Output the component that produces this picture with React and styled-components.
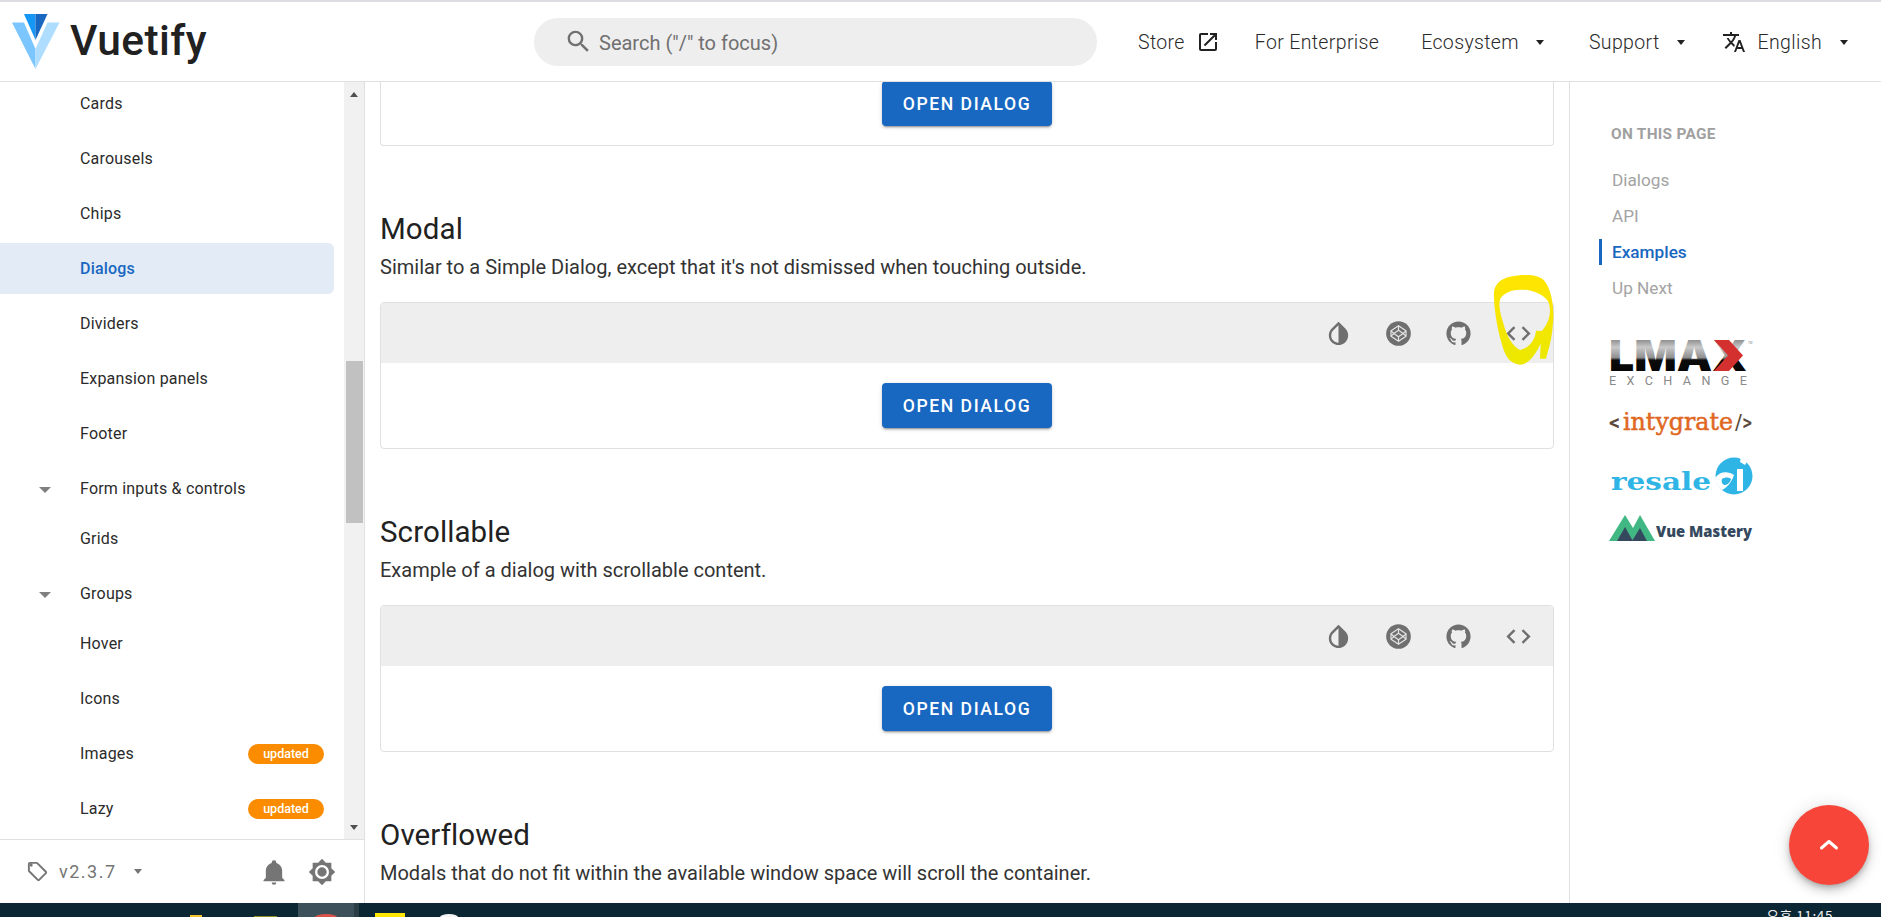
import React from 'react';
import styled, { createGlobalStyle } from 'styled-components';

const Global = createGlobalStyle`
  html, body { margin: 0; padding: 0; height: 100%; overflow: hidden; background: #fff; }
  body { font-family: Roboto, "Noto Sans", sans-serif; color: #212121; }
  * { box-sizing: border-box; }
`;

const Page = styled.div`
  position: relative;
  width: 1881px;
  height: 917px;
  display: flex;
  flex-direction: column;
  overflow: hidden;
  border-top: 2px solid #dcdce2;
`;

/* Header */
const Header = styled.header`
  flex: 0 0 80px;
  display: flex;
  align-items: center;
  border-bottom: 1px solid #e0e0e0;
  background: #fff;
  position: relative;
  z-index: 2;
`;
const Brand = styled.div`
  flex: 0 0 534px;
  display: flex;
  align-items: center;
  padding-left: 12px;
  gap: 10px;
`;
const BrandName = styled.span`
  font-size: 42.5px;
  font-weight: 500;
  line-height: 1;
  letter-spacing: 0.4px;
  color: #212121;
`;
const Search = styled.div`
  flex: 0 0 563px;
  height: 48px;
  border-radius: 24px;
  background: #eeeeee;
  display: flex;
  align-items: center;
  padding-left: 30px;
  gap: 6px;
  font-size: 20px;
  color: #707070;
  font-weight: 400;
`;
const SearchText = styled.span`
  padding-top: 2px;
`;
const Nav = styled.nav`
  display: flex;
  align-items: center;
  margin-left: 41px;
  padding-top: 1px;
  font-size: 19.5px;
  font-weight: 300;
  letter-spacing: 0.35px;
  color: #2a2a2a;
`;
const NavItem = styled.span`
  display: flex;
  align-items: center;
  gap: ${(p) => p.$gap ?? 0}px;
  margin-left: ${(p) => p.$left ?? 0}px;
`;
const Caret = styled.span`
  display: inline-block;
  width: 0;
  height: 0;
  margin-left: ${(p) => p.$left ?? 0}px;
  border-left: 4.5px solid transparent;
  border-right: 4.5px solid transparent;
  border-top: 5px solid ${(p) => p.$color ?? '#222'};
`;

/* Body */
const Body = styled.div`
  flex: 1;
  min-height: 0;
  display: flex;
`;

/* Sidebar */
const Sidebar = styled.aside`
  flex: 0 0 365px;
  display: flex;
  flex-direction: column;
  border-right: 1px solid #e0e0e0;
`;
const SideScroll = styled.div`
  flex: 0 0 758px;
  display: flex;
  overflow: hidden;
  border-bottom: 1px solid #e0e0e0;
`;
const SideList = styled.ul`
  list-style: none;
  flex: 1;
  margin: -4px 0 0;
  padding: 0 10px 0 0;
`;
const SideRow = styled.li`
  height: 51px;
  margin-bottom: ${(p) => (p.$group ? -1 : 4)}px;
  padding: 0 10px 0 80px;
  display: flex;
  align-items: center;
  position: relative;
  border-radius: 0 6px 6px 0;
  font-size: 16px;
  letter-spacing: 0.2px;
  font-weight: ${(p) => (p.$active ? 500 : 400)};
  color: ${(p) => (p.$active ? '#1867c0' : '#2b2b2b')};
  background: ${(p) => (p.$active ? '#e3ebf6' : 'transparent')};
`;
const RowCaret = styled.span`
  position: absolute;
  left: 39px;
  top: 24px;
  width: 0;
  height: 0;
  border-left: 6px solid transparent;
  border-right: 6px solid transparent;
  border-top: 6px solid #808080;
`;
const Badge = styled.span`
  margin-left: auto;
  width: 76px;
  height: 20px;
  border-radius: 10px;
  background: #fb8c00;
  color: #fff;
  font-size: 12.5px;
  font-weight: 500;
  letter-spacing: 0;
  display: flex;
  align-items: center;
  justify-content: center;
`;
const Track = styled.div`
  flex: 0 0 20px;
  background: #f1f1f1;
  display: flex;
  flex-direction: column;
  align-items: center;
  padding: 10px 0 9px;
`;
const ArrowUp = styled.span`
  width: 0;
  height: 0;
  border-left: 4.5px solid transparent;
  border-right: 4.5px solid transparent;
  border-bottom: 5px solid #505050;
`;
const ArrowDown = styled.span`
  width: 0;
  height: 0;
  margin-top: auto;
  border-left: 4.5px solid transparent;
  border-right: 4.5px solid transparent;
  border-top: 5px solid #505050;
`;
const Thumb = styled.div`
  width: 17px;
  height: 162px;
  margin-top: 264px;
  background: #c1c1c1;
`;
const SideFooter = styled.div`
  flex: 1;
  display: flex;
  align-items: center;
  padding: 0 28px 0 26px;
  color: #757575;
`;
const Version = styled.span`
  margin-left: 10px;
  font-size: 18px;
  letter-spacing: 1.5px;
  color: #757575;
`;
const FooterIcons = styled.div`
  margin-left: auto;
  display: flex;
  align-items: center;
  gap: 20px;
`;

/* Main */
const Main = styled.main`
  flex: 1;
  min-width: 0;
  padding: 0 15px;
  overflow: hidden;
`;
const Card = styled.div`
  border: 1px solid #e0e0e0;
  border-radius: 4px;
  overflow: hidden;
`;
const TopCard = styled(Card)`
  height: 64px;
  border-top: 0;
  border-radius: 0 0 4px 4px;
  overflow: visible;
  display: flex;
  justify-content: center;
  align-items: flex-start;
`;
const Toolbar = styled.div`
  height: 60px;
  background: #eeeeee;
  display: flex;
  align-items: center;
  justify-content: flex-end;
  padding-right: 20px;
  gap: 31px;
  color: #6f6f6f;
`;
const CardBody = styled.div`
  height: 85px;
  display: flex;
  align-items: center;
  justify-content: center;
`;
const DialogButton = styled.button`
  width: 170px;
  height: 45px;
  margin-top: ${(p) => p.$lift ?? 0}px;
  border: 0;
  border-radius: 4px;
  background: #1867c0;
  color: #fff;
  font-family: Roboto, sans-serif;
  font-size: 17.6px;
  font-weight: 500;
  letter-spacing: 1.55px;
  white-space: nowrap;
  box-shadow: 0 3px 1px -2px rgba(0,0,0,.2), 0 2px 2px 0 rgba(0,0,0,.14), 0 1px 5px 0 rgba(0,0,0,.12);
`;
const Section = styled.section`
  padding-top: 63px;
`;
const Title = styled.h2`
  margin: 0;
  height: 40px;
  line-height: 40px;
  font-size: 29.5px;
  font-weight: 400;
  letter-spacing: 0.1px;
  color: #212121;
`;
const Lead = styled.p`
  margin: 3px 0 20px;
  height: 30px;
  line-height: 30px;
  font-size: 20px;
  font-weight: 400;
  color: #333;
`;

/* Right */
const Aside = styled.aside`
  flex: 0 0 312px;
  border-left: 1px solid #e0e0e0;
  padding: 42px 0 0 29px;
`;
const AsideTitle = styled.div`
  height: 20px;
  line-height: 20px;
  padding-left: 12px;
  font-size: 15.4px;
  font-weight: 700;
  letter-spacing: 0.3px;
  color: #a0a0a0;
  margin-bottom: 23px;
`;
const TocItem = styled.div`
  height: 26px;
  line-height: 26px;
  margin-bottom: 10px;
  padding-left: 10px;
  border-left: 3px solid ${(p) => (p.$active ? '#1867c0' : 'transparent')};
  font-size: 17.2px;
  font-weight: ${(p) => (p.$active ? 500 : 400)};
  color: ${(p) => (p.$active ? '#1867c0' : '#a3a3a3')};
`;
const Logos = styled.div`
  margin: 39px 0 0 10px;
  display: flex;
  flex-direction: column;
`;
const LogoSvg = styled.svg`
  display: block;
  margin-bottom: ${(p) => p.$after ?? 0}px;
`;

/* Taskbar */
const Taskbar = styled.div`
  flex: 0 0 14px;
  background: #0a2733;
  display: flex;
  overflow: hidden;
`;
const TaskShape = styled.span`
  flex: none;
  width: ${(p) => p.$w}px;
  height: ${(p) => p.$h}px;
  margin-top: ${(p) => p.$top}px;
  margin-left: ${(p) => p.$left}px;
  background: ${(p) => p.$bg};
  border-radius: ${(p) => p.$round ?? 0};
`;
const ActiveTask = styled.div`
  flex: none;
  width: 61px;
  margin-left: 21px;
  background: #3d515a;
  border-right: 5px solid #2b3d45;
  display: flex;
  justify-content: center;
`;
const Clock = styled.span`
  margin-left: auto;
  margin-right: 48px;
  padding-top: 4px;
  font-family: "Noto Sans CJK KR", Roboto, sans-serif;
  font-size: 13.5px;
  line-height: 16px;
  letter-spacing: 0.6px;
  color: #f2f2f2;
  white-space: nowrap;
`;

/* Overlays */
const Fab = styled.button`
  position: absolute;
  left: 1789px;
  top: 803px;
  width: 80px;
  height: 80px;
  border: 0;
  border-radius: 50%;
  background: #f74639;
  display: flex;
  align-items: center;
  justify-content: center;
  box-shadow: 0 3px 5px -1px rgba(0,0,0,.2), 0 6px 10px 0 rgba(0,0,0,.14), 0 1px 18px 0 rgba(0,0,0,.12);
`;
const Scribble = styled.svg`
  position: absolute;
  left: 1290px;
  top: 258px;
  pointer-events: none;
  z-index: 3;
`;

const P = {
  magnify: 'M9.5,3A6.5,6.5 0 0,1 16,9.5C16,11.11 15.41,12.59 14.5,13.73L14.77,14H15.5L20.5,19L19,20.5L14,15.5V14.77L13.73,14.5C12.59,15.41 11.11,16 9.5,16A6.5,6.5 0 0,1 3,9.5A6.5,6.5 0 0,1 9.5,3M9.5,5C7,5 5,7 5,9.5C5,12 7,14 9.5,14C12,14 14,12 14,9.5C14,7 12,5 9.5,5Z',
  open: 'M14,3V5H17.59L7.76,14.83L9.17,16.24L19,6.41V10H21V3M19,19H5V5H12V3H5C3.89,3 3,3.9 3,5V19A2,2 0 0,0 5,21H19A2,2 0 0,0 21,19V12H19V19Z',
  translate: 'M12.87,15.07L10.33,12.56L10.36,12.53C12.1,10.59 13.34,8.36 14.07,6H17V4H10V2H8V4H1V6H12.17C11.5,7.92 10.44,9.75 9,11.35C8.07,10.32 7.3,9.19 6.69,8H4.69C5.42,9.63 6.42,11.17 7.67,12.56L2.58,17.58L4,19L9,14L12.11,17.11L12.87,15.07M18.5,10H16.5L12,22H14L15.12,19H19.87L21,22H23L18.5,10M15.88,17L17.5,12.67L19.12,17H15.88Z',
  tag: 'M5.5,7A1.5,1.5 0 0,1 4,5.5A1.5,1.5 0 0,1 5.5,4A1.5,1.5 0 0,1 7,5.5A1.5,1.5 0 0,1 5.5,7M21.41,11.58L12.41,2.58C12.05,2.22 11.55,2 11,2H4C2.89,2 2,2.89 2,4V11C2,11.55 2.22,12.05 2.59,12.41L11.59,21.41C11.95,21.77 12.45,22 13,22C13.55,22 14.05,21.77 14.41,21.41L21.41,14.41C21.78,14.05 22,13.55 22,13C22,12.44 21.77,11.94 21.41,11.58M13,20L4,11V4H11V4L20,13L13,20Z',
  bell: 'M21,19V20H3V19L5,17V11C5,7.9 7.03,5.17 10,4.29C10,4.19 10,4.1 10,4A2,2 0 0,1 12,2A2,2 0 0,1 14,4C14,4.1 14,4.19 14,4.29C16.97,5.17 19,7.9 19,11V17L21,19M14,21A2,2 0 0,1 12,23A2,2 0 0,1 10,21',
  sun: 'M12,8A4,4 0 0,0 8,12A4,4 0 0,0 12,16A4,4 0 0,0 16,12A4,4 0 0,0 12,8M12,18A6,6 0 0,1 6,12A6,6 0 0,1 12,6A6,6 0 0,1 18,12A6,6 0 0,1 12,18M20,8.69V4H15.31L12,0.69L8.69,4H4V8.69L0.69,12L4,15.31V20H8.69L12,23.31L15.31,20H20V15.31L23.31,12L20,8.69Z',
  invert: 'M12,19.58V19.58C10.4,19.58 8.89,18.96 7.76,17.83C6.62,16.69 6,15.19 6,13.58C6,12 6.62,10.47 7.76,9.34L12,5.1M17.66,7.93L12,2.27V2.27L6.34,7.93C3.22,11.05 3.22,16.12 6.34,19.24C7.9,20.8 9.95,21.58 12,21.58C14.05,21.58 16.1,20.8 17.66,19.24C20.78,16.12 20.78,11.05 17.66,7.93Z',
  github: 'M12,2A10,10 0 0,0 2,12C2,16.42 4.87,20.17 8.84,21.5C9.34,21.58 9.5,21.27 9.5,21C9.5,20.77 9.5,20.14 9.5,19.31C6.73,19.91 6.14,17.97 6.14,17.97C5.68,16.81 5.03,16.5 5.03,16.5C4.12,15.88 5.1,15.9 5.1,15.9C6.1,15.97 6.63,16.93 6.63,16.93C7.5,18.45 8.97,18 9.54,17.76C9.63,17.11 9.89,16.67 10.17,16.42C7.95,16.17 5.62,15.31 5.62,11.5C5.62,10.39 6,9.5 6.65,8.79C6.55,8.54 6.2,7.5 6.75,6.15C6.75,6.15 7.59,5.88 9.5,7.17C10.29,6.95 11.15,6.84 12,6.84C12.85,6.84 13.71,6.95 14.5,7.17C16.41,5.88 17.25,6.15 17.25,6.15C17.8,7.5 17.45,8.54 17.35,8.79C18,9.5 18.38,10.39 18.38,11.5C18.38,15.32 16.04,16.16 13.81,16.41C14.17,16.72 14.5,17.33 14.5,18.26C14.5,19.6 14.5,20.68 14.5,21C14.5,21.27 14.66,21.59 15.17,21.5C19.14,20.16 22,16.42 22,12A10,10 0 0,0 12,2Z',
  code: 'M14.6,16.6L19.2,12L14.6,7.4L16,6L22,12L16,18L14.6,16.6M9.4,16.6L4.8,12L9.4,7.4L8,6L2,12L8,18L9.4,16.6Z',
};

const Icon = ({ d, size = 24, color = 'currentColor' }) => (
  <svg width={size} height={size} viewBox="0 0 24 24" fill={color} style={{ display: 'block', flex: 'none' }}>
    <path d={d} />
  </svg>
);

const CodepenIcon = ({ size = 29 }) => (
  <svg width={size} height={size} viewBox="0 0 24 24" style={{ display: 'block', flex: 'none' }}>
    <circle cx="12" cy="12" r="10.2" fill="#6f6f6f" />
    <g fill="none" stroke="#e4e4e4" strokeWidth="1" strokeLinejoin="round">
      <path d="M12 5.6 18.2 9.8V14.2L12 18.4 5.8 14.2V9.8Z" />
      <path d="M12 9.4 15.8 12 12 14.6 8.2 12Z" />
      <path d="M12 5.6V9.4M12 14.6V18.4M5.8 9.8 8.2 12M18.2 9.8 15.8 12M5.8 14.2 8.2 12M18.2 14.2 15.8 12" />
    </g>
  </svg>
);

const VuetifyLogo = () => (
  <svg width="48" height="56" viewBox="0 0 48 56" style={{ display: 'block', flex: 'none' }}>
    <path d="M12 0H23.5V26Z" fill="#1697f6" />
    <path d="M35.5 0H23.5V26Z" fill="#1867c0" />
    <path d="M0 8.5H12L23.5 35V55Z" fill="#7bc6ff" />
    <path d="M47.5 8.5H35.5L23.5 35V55Z" fill="#aeddff" />
  </svg>
);

const Actions = () => (
  <Toolbar>
    <Icon d={P.invert} size={29} />
    <CodepenIcon />
    <Icon d={P.github} size={29} />
    <Icon d={P.code} size={29} />
  </Toolbar>
);

const Example = ({ title, text }) => (
  <Section>
    <Title>{title}</Title>
    <Lead>{text}</Lead>
    <Card>
      <Actions />
      <CardBody>
        <DialogButton>OPEN DIALOG</DialogButton>
      </CardBody>
    </Card>
  </Section>
);

const rows = [
  { t: 'Cards' }, { t: 'Carousels' }, { t: 'Chips' }, { t: 'Dialogs', active: true },
  { t: 'Dividers' }, { t: 'Expansion panels' }, { t: 'Footer' },
  { t: 'Form inputs & controls', group: true }, { t: 'Grids' },
  { t: 'Groups', group: true }, { t: 'Hover' }, { t: 'Icons' },
  { t: 'Images', badge: true }, { t: 'Lazy', badge: true },
];

const LmaxLogo = () => (
  <LogoSvg width="145" height="46" viewBox="0 0 145 46" $after={25}>
    <defs>
      <linearGradient id="lmaxFill" x1="0" y1="0" x2="0" y2="1">
        <stop offset="0" stopColor="#3a3a3a" />
        <stop offset="0.35" stopColor="#c9c9c9" />
        <stop offset="0.55" stopColor="#8f8f8f" />
        <stop offset="0.6" stopColor="#0c0c0c" />
        <stop offset="1" stopColor="#000" />
      </linearGradient>
    </defs>
    <text x="0" y="31" fontFamily="Inter, 'Liberation Sans', sans-serif" fontWeight="900" fontSize="43" textLength="138" lengthAdjust="spacingAndGlyphs" fill="url(#lmaxFill)">LMAX</text>
    <path d="M105 0H120L134 15.5 120 31H105L119 15.5Z" fill="#d3302f" />
    <text x="139" y="4" fontFamily="Roboto, sans-serif" fontSize="3" fill="#888">TM</text>
    <text x="0" y="45" fontFamily="Roboto, sans-serif" fontSize="12.6" textLength="138" fill="#8a8a8a">EXCHANGE</text>
  </LogoSvg>
);

const IntygrateLogo = () => (
  <LogoSvg width="145" height="26" viewBox="0 0 145 26" $after={19}>
    <text x="0" y="19" fontFamily="Roboto, sans-serif" fontWeight="500" fontSize="22" fill="#5b4a3c">&lt;</text>
    <text x="14" y="19" fontFamily="'DejaVu Serif', serif" fontSize="24" textLength="110" lengthAdjust="spacingAndGlyphs" fill="#e0671f" stroke="#e0671f" strokeWidth="0.5">intygrate</text>
    <text x="126" y="19" fontFamily="Roboto, sans-serif" fontWeight="500" fontSize="22" textLength="17" lengthAdjust="spacingAndGlyphs" fill="#5b4a3c">/&gt;</text>
  </LogoSvg>
);

const ResaleLogo = () => (
  <LogoSvg width="145" height="40" viewBox="0 0 145 40" $after={19}>
    <text x="2" y="34" fontFamily="'DejaVu Serif', serif" fontWeight="700" fontSize="25" textLength="100" lengthAdjust="spacingAndGlyphs" fill="#2fb5e5">resale</text>
    <circle cx="125" cy="20" r="18.5" fill="#2fb5e5" />
    <path d="M106 22C111 15 119 15 125 19 123 25 119 31 113 34 109 31 107 27 106 22Z" fill="#fff" />
    <path d="M128 13H134V35H128Z" fill="#fff" />
    <path d="M132 1 139 4 136 9 131 6Z" fill="#fff" />
    <path d="M113 23C116 21 120 21 122 23 121 27 118 29 115 29 113 28 112 25 113 23Z" fill="#2fb5e5" />
  </LogoSvg>
);

const VueMasteryLogo = () => (
  <LogoSvg width="145" height="27" viewBox="0 0 145 27">
    <path d="M0 26 16 0 24 13 31 0 46 26H37L31 15 24 26 16 14 9 26Z" fill="#41b883" />
    <path d="M8 26 16 12 24 26ZM23 26 31 13 38 26Z" fill="#35495e" />
    <text x="47" y="22" fontFamily="'Open Sans', sans-serif" fontWeight="800" fontSize="16" textLength="96" lengthAdjust="spacingAndGlyphs" fill="#35495e">Vue Mastery</text>
  </LogoSvg>
);

export default function App() {
  return (
    <Page>
      <Global />
      <Header>
        <Brand>
          <VuetifyLogo />
          <BrandName>Vuetify</BrandName>
        </Brand>
        <Search>
          <Icon d={P.magnify} size={29} color="#707070" />
          <SearchText>Search ("/" to focus)</SearchText>
        </Search>
        <Nav>
          <NavItem $gap={11}>Store <Icon d={P.open} size={24} color="#222" /></NavItem>
          <NavItem $left={35}>For Enterprise</NavItem>
          <NavItem $left={42}>Ecosystem<Caret $left={17} /></NavItem>
          <NavItem $left={45}>Support<Caret $left={17} /></NavItem>
          <NavItem $left={37} $gap={12}><Icon d={P.translate} size={24} color="#222" />English<Caret $left={6} /></NavItem>
        </Nav>
      </Header>
      <Body>
        <Sidebar>
          <SideScroll>
            <SideList>
              {rows.map((r) => (
                <SideRow key={r.t} $active={r.active} $group={r.group}>
                  {r.group && <RowCaret />}
                  {r.t}
                  {r.badge && <Badge>updated</Badge>}
                </SideRow>
              ))}
            </SideList>
            <Track>
              <ArrowUp />
              <Thumb />
              <ArrowDown />
            </Track>
          </SideScroll>
          <SideFooter>
            <Icon d={P.tag} size={23} color="#757575" />
            <Version>v2.3.7</Version>
            <Caret $left={17} $color="#757575" />
            <FooterIcons>
              <Icon d={P.bell} size={28} color="#757575" />
              <Icon d={P.sun} size={28} color="#757575" />
            </FooterIcons>
          </SideFooter>
        </Sidebar>
        <Main>
          <TopCard>
            <DialogButton $lift={-1}>OPEN DIALOG</DialogButton>
          </TopCard>
          <Example title="Modal" text="Similar to a Simple Dialog, except that it's not dismissed when touching outside." />
          <Example title="Scrollable" text="Example of a dialog with scrollable content." />
          <Section>
            <Title>Overflowed</Title>
            <Lead>Modals that do not fit within the available window space will scroll the container.</Lead>
          </Section>
        </Main>
        <Aside>
          <AsideTitle>ON THIS PAGE</AsideTitle>
          <TocItem>Dialogs</TocItem>
          <TocItem>API</TocItem>
          <TocItem $active>Examples</TocItem>
          <TocItem>Up Next</TocItem>
          <Logos>
            <LmaxLogo />
            <IntygrateLogo />
            <ResaleLogo />
            <VueMasteryLogo />
          </Logos>
        </Aside>
      </Body>
      <Taskbar>
        <TaskShape $w={12} $h={3} $top={12} $left={190} $bg="#f4c430" />
        <TaskShape $w={23} $h={2} $top={13} $left={52} $bg="#8a8f1e" />
        <ActiveTask>
          <TaskShape $w={22} $h={6} $top={11} $left={0} $bg="#d9534a" $round="50%" />
        </ActiveTask>
        <TaskShape $w={30} $h={5} $top={10} $left={16} $bg="#ffe600" />
        <TaskShape $w={18} $h={6} $top={11} $left={35} $bg="#f5f5f5" $round="50%" />
        <Clock>오후 11:45</Clock>
      </Taskbar>
      <Fab aria-label="Back to top">
        <svg width="24" height="24" viewBox="0 0 24 24" fill="none" stroke="#fff" strokeWidth="3" strokeLinecap="round" strokeLinejoin="round">
          <path d="M4.5 15 12 8.5 19.5 15" />
        </svg>
      </Fab>
      <Scribble width="300" height="120" viewBox="0 0 900 360">
        <defs>
          <linearGradient id="marker" x1="0" y1="0" x2="0" y2="1">
            <stop offset="0" stopColor="#ffe500" />
            <stop offset="1" stopColor="#ebe800" />
          </linearGradient>
        </defs>
        <path
          fillRule="evenodd"
          fill="url(#marker)"
          d="M660 50C700 42 750 42 765 65C785 90 795 150 788 200C785 240 775 270 768 296L750 296L752 250C740 280 715 315 690 314C660 312 645 290 635 250C620 200 610 130 612 95C615 70 635 55 660 50ZM665 92C700 85 750 90 775 125C785 150 780 185 755 213L738 212C735 240 720 262 690 270C670 262 650 230 640 190C630 160 622 125 635 110C645 100 655 95 665 92Z"
        />
      </Scribble>
    </Page>
  );
}
